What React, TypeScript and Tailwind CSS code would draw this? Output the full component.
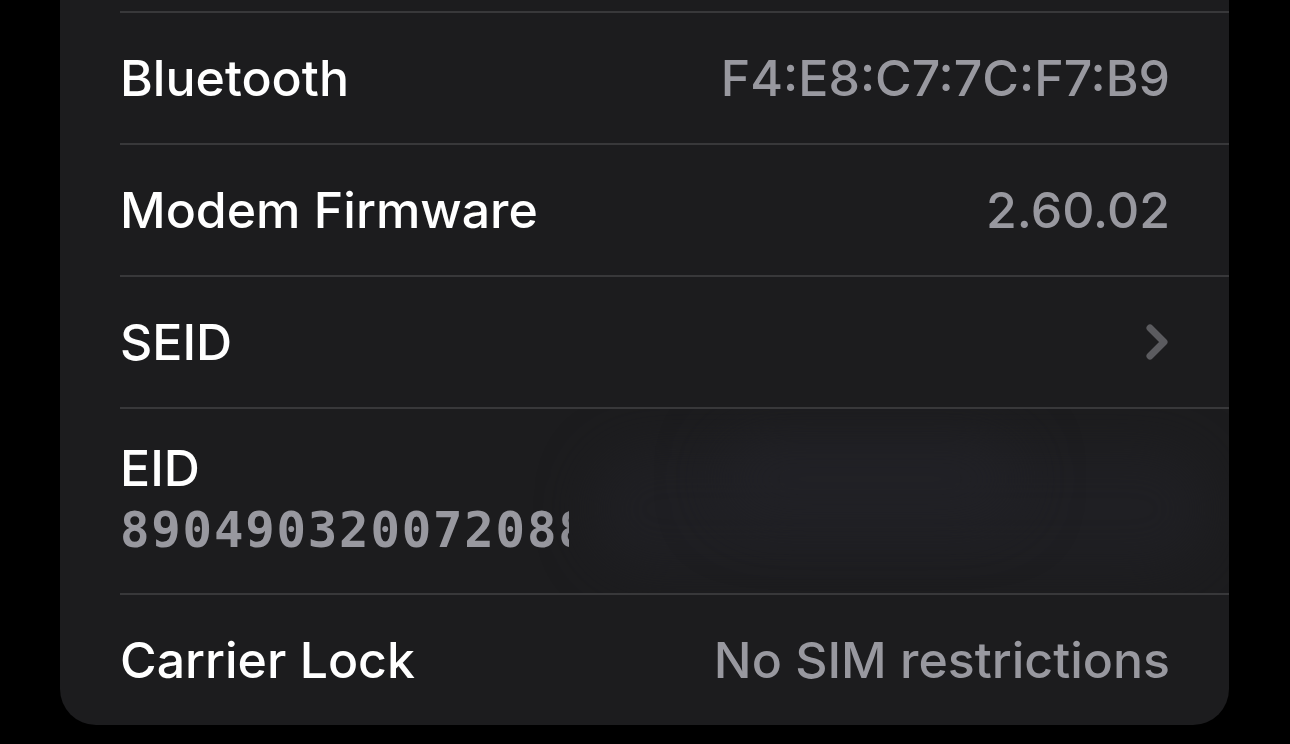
import React from "react";

const sf = { fontFamily: "Inter, 'Noto Sans', sans-serif" };

function Row({ label, value, chevron }: { label: string; value?: string; chevron?: boolean }) {
  return (
    <div className="h-[132px] border-t-2 border-[#38383a] flex items-center justify-between pr-[59px]">
      <span className="text-white text-[50px] font-medium" style={sf}>{label}</span>
      {value && <span className="text-[#98989f] text-[50px] font-medium" style={sf}>{value}</span>}
      {chevron && (
        <svg width="24" height="38" viewBox="0 0 24 38" className="mr-[1px]">
          <path d="M5 5 L19 19 L5 33" stroke="#5b5b5f" strokeWidth="7" fill="none" strokeLinecap="round" strokeLinejoin="round" />
        </svg>
      )}
    </div>
  );
}

export default function App() {
  return (
    <div className="w-[1290px] h-[744px] bg-black pl-[60px] pr-[61px] overflow-hidden">
      <div className="bg-[#1c1c1e] rounded-b-[36px] pl-[60px] pt-[11px]">
        <Row label="Bluetooth" value="F4:E8:C7:7C:F7:B9" />
        <Row label="Modem Firmware" value="2.60.02" />
        <Row label="SEID" chevron />
        <div className="relative h-[186px] border-t-2 border-[#38383a] flex flex-col justify-center overflow-hidden">
          <span className="text-white text-[50px] font-medium leading-[60px]" style={sf}>EID</span>
          <span className="text-[#98989f] text-[49px] font-bold leading-[66px] tracking-[1.8px]" style={{ fontFamily: "'DejaVu Sans Mono', monospace" }}>890490320072088</span>
          <div className="absolute left-[449px] top-[6px] w-[700px] h-[176px] bg-[#1c1c1e]"></div>
          <div className="absolute left-[470px] top-[40px] w-[620px] h-[120px] bg-[#1f1f23] blur-[25px] rounded-full"></div>
          <div className="absolute left-[600px] top-[30px] w-[300px] h-[80px] bg-[#212126] blur-[30px] rounded-full"></div>
        </div>
        <Row label="Carrier Lock" value="No SIM restrictions" />
      </div>
    </div>
  );
}
